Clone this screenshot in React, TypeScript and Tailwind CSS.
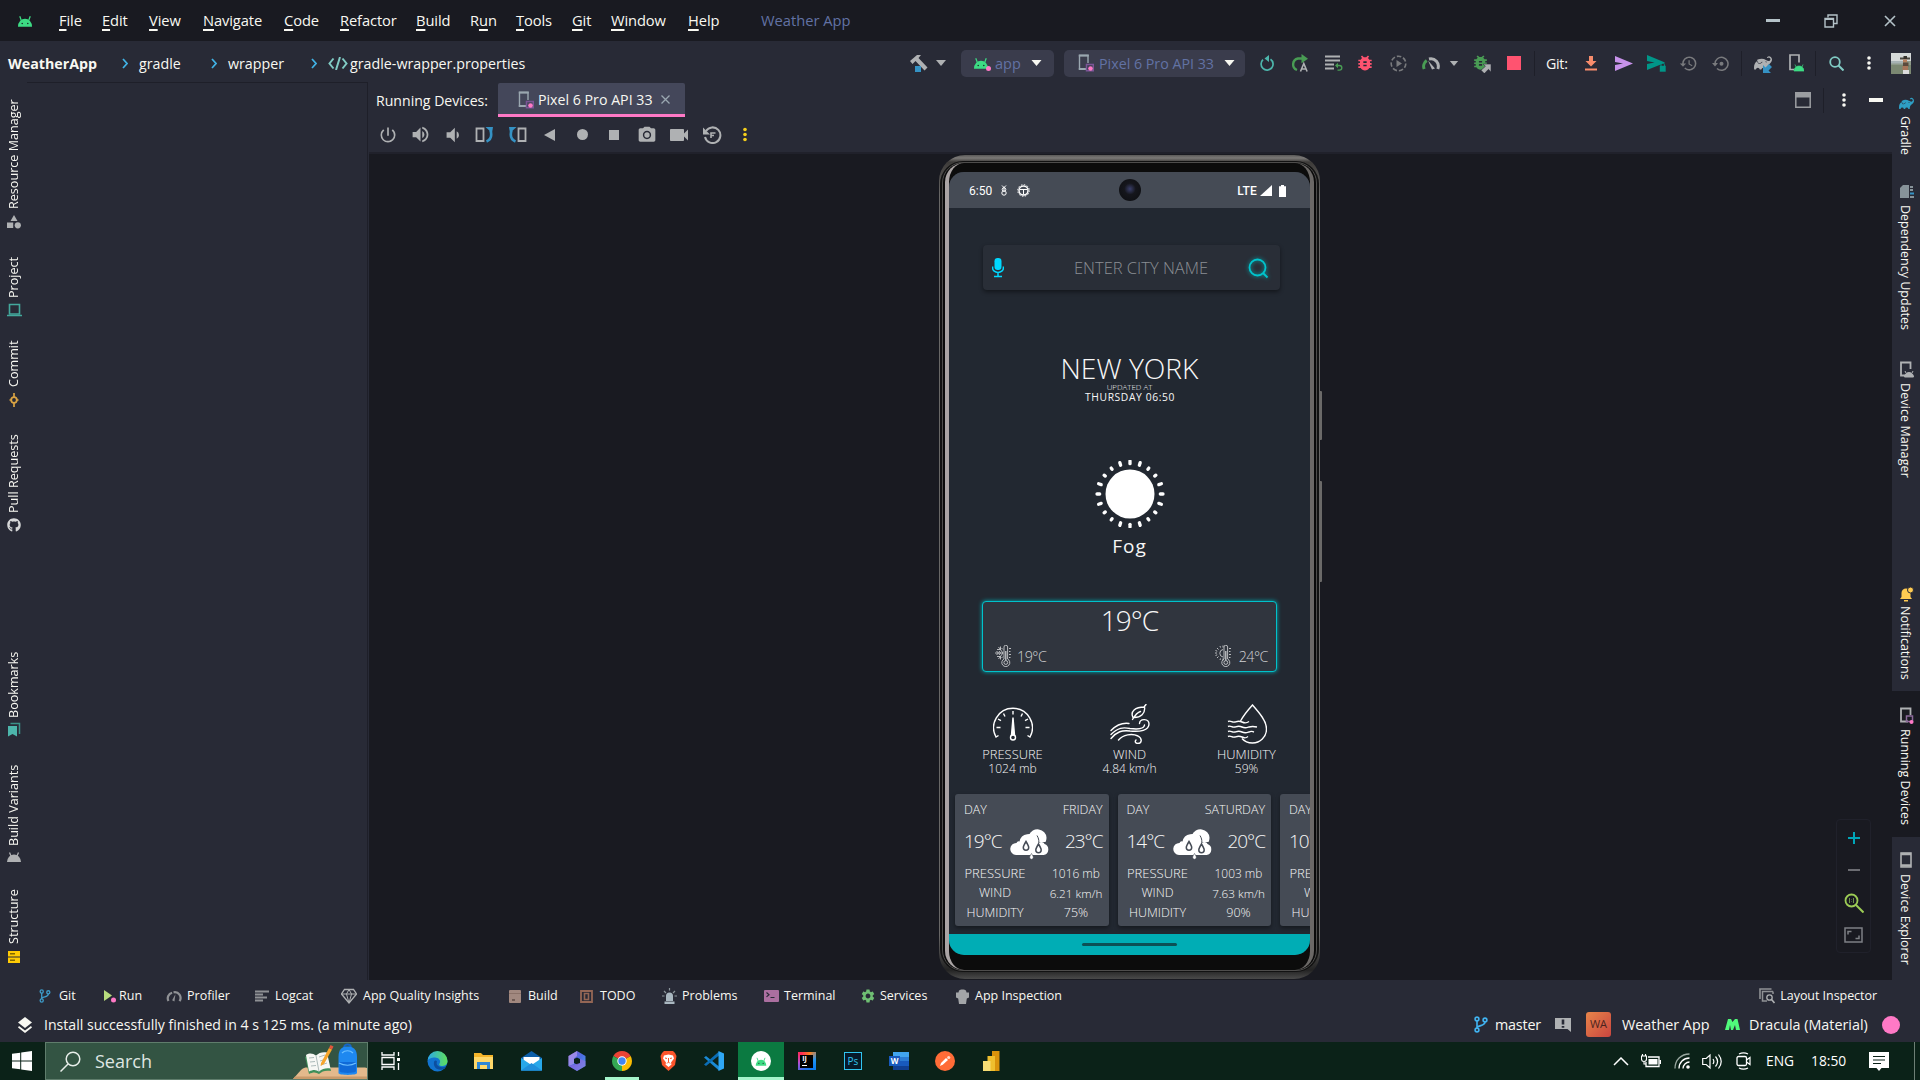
import React from 'react';
import type { ReactNode } from 'react';
import {
  MdPowerSettingsNew,
  MdVolumeUp,
  MdVolumeDown,
  MdPhotoCamera,
  MdVideocam,
  MdHistory,
  MdBugReport,
  MdSettings,
} from 'react-icons/md';
import { FaGithub } from 'react-icons/fa';
import { SiGradle } from 'react-icons/si';

type Cls = { c?: string };

function Ic({ c = '', vb = '0 0 16 16', children }: { c?: string; vb?: string; children: ReactNode }) {
  return (
    <svg viewBox={vb} className={`block shrink-0 ${c}`} fill="none">
      {children}
    </svg>
  );
}

/* ---------- shared glyphs ---------- */

const AndroidHead = ({ c = '' }: Cls) => (
  <Ic c={c} vb="0 0 18 16">
    <path d="M1 14.500a8 9 0 0 1 16 0z" fill="currentColor" />
    <path d="M5 8 3 2.500M13 8l2-5.500" stroke="currentColor" strokeWidth="1.400" />
    <circle cx="5.800" cy="10.800" r=".9" fill="#1b2a2a" />
    <circle cx="12.200" cy="10.800" r=".9" fill="#1b2a2a" />
  </Ic>
);

const Caret = ({ c = '' }: Cls) => (
  <Ic c={c} vb="0 0 10 6">
    <path d="M0 0h10L5 6z" fill="currentColor" />
  </Ic>
);

const Dots = ({ c = '' }: Cls) => (
  <Ic c={c} vb="0 0 4 14">
    <circle cx="2" cy="2" r="1.8" fill="currentColor" />
    <circle cx="2" cy="7" r="1.8" fill="currentColor" />
    <circle cx="2" cy="12" r="1.8" fill="currentColor" />
  </Ic>
);

const PhoneRun = ({ c = '' }: Cls) => (
  <Ic c={c} vb="0 0 16 18">
    <path d="M9 15H1.500V1.500H10V9" stroke="#9aa7b0" strokeWidth="1.400" />
    <path d="M.800 1.500h10M.800 15H8" stroke="#9aa7b0" strokeWidth="2" />
    <path d="M8.500 10.500h6.800v6.300H8.500z" stroke="#7a5596" strokeWidth="1.500" />
    <circle cx="12.500" cy="14.500" r="2.300" fill="#ff79c6" />
  </Ic>
);

const Branch = ({ c = '' }: Cls) => (
  <Ic c={c} vb="0 0 14 17">
    <g stroke="currentColor" strokeWidth="1.600">
      <circle cx="3" cy="3" r="1.900" />
      <circle cx="11" cy="4" r="1.900" />
      <circle cx="3" cy="14" r="1.900" />
      <path d="M3 4.800v7.400M11 6c0 3.500-4 3-8 5" />
    </g>
  </Ic>
);

const Gauge = ({ c = '' }: Cls) => (
  <Ic c={c} vb="0 0 18 14">
    <path d="M2.200 13a7 7 0 0 1 2.500-8.500" stroke="#499c54" strokeWidth="3" />
    <path d="M7 3a7.500 7.500 0 0 1 8.800 10" stroke="#afb1b3" strokeWidth="3" />
    <path d="m6 4.500 7 8-3 1z" fill="#afb1b3" />
  </Ic>
);

const GaugeGray = ({ c = '' }: Cls) => (
  <Ic c={c} vb="0 0 16 13">
    <path d="M2 12a6.200 6.200 0 0 1 4-9M7.500 2.500A6.200 6.200 0 0 1 14 12" stroke="#8f9195" strokeWidth="2.400" />
    <path d="m9.500 4.500-1 8L6 11z" fill="#8f9195" />
  </Ic>
);

/* ---------- title bar ---------- */

const menus = [
  { k: 'F', r: 'ile', c: 'w-[43px]' },
  { k: 'E', r: 'dit', c: 'w-[47px]' },
  { k: 'V', r: 'iew', c: 'w-[54px]' },
  { k: 'N', r: 'avigate', c: 'w-[81px]' },
  { k: 'C', r: 'ode', c: 'w-[56px]' },
  { k: 'R', r: 'efactor', c: 'w-[76px]' },
  { k: 'B', r: 'uild', c: 'w-[54px]' },
  { p: 'R', k: 'u', r: 'n', c: 'w-[46px]' },
  { k: 'T', r: 'ools', c: 'w-[56px]' },
  { k: 'G', r: 'it', c: 'w-[39px]' },
  { k: 'W', r: 'indow', c: 'w-[77px]' },
  { k: 'H', r: 'elp', c: 'w-[73px]' },
];

function TitleBar() {
  return (
    <div className="flex h-[41px] shrink-0 items-center bg-[#191a21] text-[14.700px] text-[#f8f8f2]">
      <AndroidHead c="ml-[17px] mr-[26px] h-[14px] w-4 text-[#3ddc84]" />
      {menus.map((m) => (
        <span key={m.k + m.r} className={`shrink-0 tracking-[-0.1px] ${m.c}`}>
          {m.p}
          <span className="underline decoration-2 underline-offset-[3px]">{m.k}</span>
          {m.r}
        </span>
      ))}
      <span className="text-[#6272a4]">Weather App</span>
      <span className="ml-auto mr-[44px] h-[3px] w-[14px] bg-[#b4c2c8]" />
      <Ic c="mr-[46px] h-[14px] w-[14px]" vb="0 0 14 14">
        <path d="M4 3.500V1h9v8.500h-3" stroke="#b4c2c8" strokeWidth="1.400" />
        <path d="M1 4.500h8.500V13H1z" stroke="#b4c2c8" strokeWidth="1.400" />
        <path d="M1 5h8.500" stroke="#b4c2c8" strokeWidth="2" />
      </Ic>
      <Ic c="mr-6 h-3 w-3" vb="0 0 12 12">
        <path d="m1 1 10 10M11 1 1 11" stroke="#b4c2c8" strokeWidth="1.600" />
      </Ic>
    </div>
  );
}

/* ---------- main toolbar ---------- */

const Chevron = ({ c = '' }: Cls) => (
  <Ic c={c} vb="0 0 6 11">
    <path d="m1 1 4 4.500-4 4.500" stroke="#41b3e6" strokeWidth="1.700" />
  </Ic>
);

const Rule = ({ c = '' }: Cls) => <span className={`h-[25px] w-px shrink-0 bg-[#1e1f29] ${c}`} />;

function Toolbar() {
  return (
    <div className="flex h-[41px] shrink-0 items-center whitespace-nowrap bg-[#282a36] pt-[3px] text-[14.250px] text-[#f8f8f2]">
      <b className="ml-2 w-[114px] shrink-0 pt-px">WeatherApp</b>
      <Chevron c="mr-[11px] h-[11px] w-[6px]" />
      <span className="w-[72px] shrink-0 pt-px">gradle</span>
      <Chevron c="mr-[11px] h-[11px] w-[6px]" />
      <span className="w-[83px] shrink-0 pt-px">wrapper</span>
      <Chevron c="mr-[11px] h-[11px] w-[6px]" />
      <Ic c="mr-[2px] h-[13px] w-5" vb="0 0 20 13">
        <path d="M5.500 1.500 1.500 6.500l4 5M14.500 1.500l4 5-4 5M12 0 8 13" stroke="#80cbc4" strokeWidth="2" />
      </Ic>
      <span className="w-[175px] shrink-0 pt-px">gradle-wrapper.properties</span>

      <Ic c="ml-[385px] h-[18px] w-[18px]" vb="0 0 18 18">
        <path d="M0 7 7 1h4L8.500 4l9 9.500-3 3L5.500 7 2.500 10z" fill="#afb1b3" />
        <path d="M5 12h6v6H5z" fill="#3592c4" />
      </Ic>
      <Caret c="ml-2 h-[6px] w-[10px] text-[#afb1b3]" />

      <div className="ml-[15px] flex h-[27px] w-[93px] shrink-0 items-center rounded-[5px] bg-[#3a3c4c] pl-3 text-[#6272a4]">
        <span className="relative mr-[6px]">
          <AndroidHead c="h-[14px] w-4 text-[#3ddc84]" />
          <span className="absolute -bottom-[1px] -right-[2px] h-[5px] w-[5px] rounded-full bg-[#ff79c6]" />
        </span>
        <span className="w-9 pt-px text-[14.500px]">app</span>
        <Caret c="h-[6px] w-[11px] text-[#f8f8f2]" />
      </div>
      <div className="ml-[10px] flex h-[27px] w-[181px] shrink-0 items-center rounded-[5px] bg-[#3a3c4c] pl-[14px] text-[#6272a4]">
        <PhoneRun c="mr-[5px] h-[18px] w-4" />
        <span className="w-[125px] pt-px">Pixel 6 Pro API 33</span>
        <Caret c="h-[6px] w-[11px] text-[#f8f8f2]" />
      </div>

      <Ic c="ml-[15px] h-[16px] w-[14px]" vb="0 0 14 16">
        <path d="M10.500 4.200A6 6 0 1 1 3 4.700" stroke="#4db6ac" strokeWidth="1.700" />
        <path d="M9 0 4.500 3.500 9 7z" fill="#4db6ac" />
      </Ic>
      <Ic c="ml-[17px] h-[18px] w-[17px]" vb="0 0 17 18">
        <path d="M6 16A6 6 0 0 1 7 4.500h5" stroke="#499c54" strokeWidth="2.400" />
        <path d="M10.500 0 17 4.700l-6.500 4.600z" fill="#499c54" />
        <path d="m9.500 17.500 3.300-8 3.300 8M10.600 15h4.400" stroke="#afb1b3" strokeWidth="1.600" />
      </Ic>
      <Ic c="ml-[17px] h-[16px] w-[18px]" vb="0 0 18 16">
        <path d="M0 1.500h15M0 5.500h15M0 9.500h9M0 13.500h9" stroke="#afb1b3" strokeWidth="2.200" />
        <path d="M11.500 10.500h3a2.300 2.300 0 0 1 0 4.600h-2" stroke="#499c54" strokeWidth="1.400" />
        <path d="m13 7.800-3 2.700 3 2.700z" fill="#499c54" />
      </Ic>
      <MdBugReport className="ml-[12px] h-5 w-5 shrink-0 text-[#ff5370]" />
      <Ic c="ml-[15px] h-[17px] w-[17px]" vb="0 0 17 17">
        <circle cx="8.500" cy="8.500" r="7.300" stroke="#797a7d" strokeWidth="1.600" strokeDasharray="4.500 2" />
        <path d="m6.500 5 5.500 3.500L6.500 12z" fill="#797a7d" />
      </Ic>
      <Gauge c="ml-[15px] h-[14px] w-[18px]" />
      <Caret c="ml-[9px] h-[5px] w-[10px] text-[#afb1b3]" />
      <span className="relative ml-[12px] h-5 w-5 shrink-0">
        <MdBugReport className="h-[19px] w-[19px] text-[#499c54]" />
        <Ic c="absolute bottom-0 right-0 h-[10px] w-[10px]" vb="0 0 9 9">
          <path d="M2 1h7v7L6.700 5.700 3 9.500 0 6.500l4-3.500z" fill="#afb1b3" stroke="#282a36" strokeWidth=".5" />
        </Ic>
      </span>
      <span className="ml-[16px] h-[14px] w-[14px] shrink-0 bg-[#ff5370]" />
      <Rule c="ml-[13px]" />
      <span className="ml-[11px] w-[22px] shrink-0 pt-px tracking-[-0.3px]">Git:</span>
      <Ic c="ml-[17px] h-[15px] w-[12px]" vb="0 0 12 15">
        <path d="M4 0h4v5h3.500L6 10.500.500 5H4z" fill="#f78c6c" />
        <path d="M0 13.500h12" stroke="#f78c6c" strokeWidth="2" />
      </Ic>
      <Ic c="ml-[18px] h-[15px] w-[18px]" vb="0 0 18 15">
        <path d="m0 0 18 7.500L0 15V9l8-1.500L0 6z" fill="#c792ea" />
      </Ic>
      <Ic c="ml-[14px] h-[18px] w-[19px]" vb="0 0 19 18">
        <path d="m0 1 18 7.500-3 1.500L0 16v-6l7.500-1.500L0 7z" fill="#009688" />
        <path d="M12.500 11.500h6.500V18h-6.500z" fill="#009688" stroke="#282a36" strokeWidth=".6" />
        <path d="M14 12v-1.500a1.700 1.700 0 0 1 3.400 0V12" stroke="#009688" />
      </Ic>
      <MdHistory className="ml-[13px] h-[19px] w-[19px] shrink-0 text-[#797a7d]" />
      <Ic c="ml-[14px] h-[17px] w-[17px]" vb="0 0 17 17">
        <path d="M3 9a6.500 6.500 0 1 1 2 4.500" stroke="#797a7d" strokeWidth="1.500" />
        <path d="M0 8h6L3 11.500z" fill="#797a7d" />
        <circle cx="9.500" cy="8.700" r="2" fill="#797a7d" />
      </Ic>
      <Rule c="ml-[12px]" />
      <span className="relative ml-[12px] shrink-0">
        <SiGradle className="h-[18px] w-[18px] text-[#afb1b3]" />
        <Ic c="absolute -bottom-[1px] right-0 h-[9px] w-[9px]" vb="0 0 9 9">
          <path d="M0 9V1l2.500 2.500L6 0l3 3-3.500 3.500L8 9z" fill="#3592c4" />
        </Ic>
      </span>
      <Ic c="ml-[17px] h-[18px] w-[15px]" vb="0 0 15 18">
        <path d="M5 15.500H1V1h9v7.500" stroke="#afb1b3" strokeWidth="1.700" />
        <path d="M5 17a5 5 0 0 1 10 0zM7 13l-1-2.500M13 13l1-2.500" fill="#3ddc84" stroke="#3ddc84" strokeWidth=".7" />
      </Ic>
      <Rule c="ml-[11px]" />
      <Ic c="ml-[13px] h-[15px] w-[15px]" vb="0 0 15 15">
        <circle cx="6" cy="6" r="4.800" stroke="#80cbc4" strokeWidth="1.800" />
        <path d="m9.500 9.500 5 5" stroke="#80cbc4" strokeWidth="2" />
      </Ic>
      <Dots c="ml-[23px] h-[14px] w-1 text-[#f8f8f2]" />
      <Ic c="ml-[20px] h-[21px] w-5" vb="0 0 20 21">
        <path d="M0 0h20v21H0z" fill="#8e9a8a" />
        <path d="M0 0h20v8H0z" fill="#d5d9d8" />
        <path d="M0 8h12v2.500H0z" fill="#a7b3b4" />
        <path d="M0 12h20v9H0z" fill="#7b8872" />
        <path d="M9 4.500h10v2H9z" fill="#4c4840" />
        <path d="M12.500 3h3.500v3h-3.500z" fill="#35312b" />
        <path d="M12 6.500h4v3h-4z" fill="#b9805d" />
        <path d="M12 9.500h5.500v4H12z" fill="#5c4a3c" />
        <path d="M11.500 13h5.500v4h-5.500z" fill="#a8765a" />
        <path d="M12 17h6v4h-6z" fill="#dcdcdc" />
      </Ic>
    </div>
  );
}

/* ---------- side strips ---------- */

const leftTabs = [
  {
    t: 'Resource Manager', c: 'mt-[15px] h-[112px]', g: 'mt-[6px]',
    i: (
      <Ic c="h-[14px] w-[14px]" vb="0 0 14 14">
        <path d="M7 0l3.500 6h-7zM0 7.500h6.200V13H0z" fill="#afb1b3" />
        <circle cx="10.800" cy="10.300" r="3.100" fill="#afb1b3" />
      </Ic>
    ),
  },
  {
    t: 'Project', c: 'mt-[28px] h-[41px]', g: 'mt-[5px]',
    i: (
      <Ic c="h-[14px] w-[15px]" vb="0 0 15 14">
        <path d="M2.500 1.500h10v9.500h-10z" stroke="#43a89c" strokeWidth="1.600" />
        <path d="M0 12.500h15" stroke="#43a89c" strokeWidth="1.500" />
      </Ic>
    ),
  },
  {
    t: 'Commit', c: 'mt-[25px] h-[45px]', g: 'mt-[6px]',
    i: (
      <Ic c="h-[14px] w-[14px]" vb="0 0 14 14">
        <circle cx="7" cy="7" r="2.800" stroke="#d9a343" strokeWidth="1.800" />
        <path d="M7 0v4M7 10v4M2.500 7h1.500M10 7h1.500" stroke="#d9a343" strokeWidth="1.700" />
      </Ic>
    ),
  },
  { t: 'Pull Requests', c: 'mt-[28px] h-[78px]', g: 'mt-[5px]', i: <FaGithub className="h-[14px] w-[14px] text-[#d6d7d8]" /> },
  {
    t: 'Bookmarks', c: 'mt-[122px] h-[64px]', g: 'mt-[4px]',
    i: (
      <Ic c="h-[15px] w-[14px]" vb="0 0 14 15">
        <path d="M1 4h9v10.500L5.500 12 1 14.500z" fill="#4db6ac" />
        <path d="M3.500 1.500h9V12" stroke="#3a9188" strokeWidth="1.500" />
      </Ic>
    ),
  },
  {
    t: 'Build Variants', c: 'mt-[29px] h-[80px]', g: 'mt-[4px]',
    i: (
      <Ic c="h-[14px] w-[14px]" vb="0 0 14 14">
        <path d="M0 12a7 7.500 0 0 1 14 0z" fill="#afb1b3" />
        <path d="M4 6 2.500 2.500M10 6l1.500-3.500" stroke="#afb1b3" strokeWidth="1.300" />
      </Ic>
    ),
  },
  {
    t: 'Structure', c: 'mt-[29px] h-[51px]', g: 'mt-[6px]',
    i: (
      <Ic c="h-[14px] w-[14px]" vb="0 0 14 14">
        <path d="M1 1h12v5.500H1zM1 7.500h12V13H1z" fill="#ffcb05" />
        <path d="M3 3.800h5M3 10.200h5" stroke="#806600" strokeWidth="1.600" />
      </Ic>
    ),
  },
];

function LeftStrip() {
  return (
    <div className="flex w-[27px] shrink-0 flex-col items-center pl-px text-[12.600px]">
      {leftTabs.map((x) => (
        <React.Fragment key={x.t}>
          <span className={`flex shrink-0 rotate-180 whitespace-nowrap leading-[18px] [writing-mode:vertical-rl] ${x.c}`}>{x.t}</span>
          <span className={`shrink-0 ${x.g}`}>{x.i}</span>
        </React.Fragment>
      ))}
    </div>
  );
}

const DevIcon = ({ run }: { run?: boolean }) => (
  <Ic c="h-[17px] w-[15px]" vb="0 0 15 17">
    <path d="M9 14.500H2V1.500h9.500V8" stroke="#afb1b3" strokeWidth="1.800" />
    {run ? (
      <>
        <path d="M7.500 9h6v5.500h-6z" stroke="#8b6a9a" strokeWidth="1.500" />
        <circle cx="12.500" cy="15" r="2" fill="#ff79c6" />
      </>
    ) : (
      <path d="M5.500 16a4.500 4.500 0 0 1 9 0zM7 12 6 10M13 12l1-2" fill="#afb1b3" stroke="#afb1b3" />
    )}
  </Ic>
);

function RightStrip() {
  const text = 'whitespace-nowrap leading-[18px] [writing-mode:vertical-rl] shrink-0 mr-[2px]';
  return (
    <div className="flex w-7 shrink-0 flex-col items-center text-[12.500px]">
      <SiGradle className="mt-[13px] h-[17px] w-[15px] shrink-0 text-[#2e9ec4]" />
      <span className={`mt-[4px] h-[40px] ${text}`}>Gradle</span>
      <Ic c="mt-[28px] h-[16px] w-[15px]" vb="0 0 15 16">
        <path d="M4 1h6v13H1V4z" fill="#87939a" />
        <path d="M11 3h3M11 6h3" stroke="#87939a" strokeWidth="1.800" />
        <path d="M11 9.500h4" stroke="#3592c4" strokeWidth="2" />
        <path d="M11 13h4" stroke="#87939a" strokeWidth="2" />
      </Ic>
      <span className={`mt-[5px] h-[126px] ${text}`}>Dependency Updates</span>
      <span className="mt-[30px]"><DevIcon /></span>
      <span className={`mt-[5px] h-[96px] tracking-[0.1px] ${text}`}>Device Manager</span>
      <Ic c="mt-[107px] h-[16px] w-[15px]" vb="0 0 15 16">
        <path d="M2.500 11V7a4.500 4.500 0 0 1 9 0v4l1.500 2H1zM5 14h4v1.500H5z" fill="#ffcb52" />
        <circle cx="11.500" cy="4" r="3" fill="#ffcb52" stroke="#282a36" />
      </Ic>
      <span className={`mt-[4px] h-[74px] ${text}`}>Notifications</span>
      <div className="mt-[11px] flex h-[146px] w-full shrink-0 flex-col items-center bg-[#191a21] pt-[16px]">
        <DevIcon run />
        <span className={`mt-[5px] ${text}`}>Running Devices</span>
      </div>
      <Ic c="mt-[15px] h-[16px] w-[12px]" vb="0 0 12 16">
        <path d="M1 1h10v14H1z" stroke="#afb1b3" strokeWidth="1.600" />
        <path d="M1 2h10M1 13.500h10" stroke="#afb1b3" strokeWidth="2.500" />
      </Ic>
      <span className={`mt-[6px] ${text}`}>Device Explorer</span>
    </div>
  );
}

/* ---------- phone ---------- */

const rays = Array.from({ length: 20 }, (_, i) => i * 18);

const Cloud = () => (
  <Ic c="h-[31px] w-10" vb="0 0 40 31">
    <path d="M19 6a9 8.500 0 0 1 17.500 2.500c0 2-.500 3.500-1 4.500H22z" fill="#fff" />
    <path d="M6 26a6 6 0 0 1 .500-12 2.500 2.500 0 0 1 3-1.500A9.500 9 0 0 1 27 9.500c1 1 1.500 3 1.500 4.500 2.500-2 5.500-1 6 1a5.700 5.700 0 0 1-1 11z" fill="#fff" />
    <path d="M27 6.500c1.500 2.500 2 4.500 1.800 7" stroke="#454b55" />
    <path d="M16 12.500c-1.800 3-2.700 4.500-2.700 6a2.700 2.700 0 0 0 5.400 0c0-1.500-.900-3-2.700-6zM28.500 15c-1.800 3-2.700 4.500-2.700 6a2.700 2.700 0 0 0 5.400 0c0-1.500-.900-3-2.700-6z" fill="#fff" stroke="#454b55" strokeWidth="1.500" />
    <path d="M21.500 24.500c-1.300 2-1.800 2.800-1.800 4a1.800 1.800 0 0 0 3.600 0c0-1.200-.500-2-1.800-4z" fill="#fff" stroke="#454b55" strokeWidth=".6" />
  </Ic>
);

const Thermo = ({ cold }: { cold?: boolean }) => (
  <Ic c="h-[22px] w-4" vb="0 0 16 22">
    <g stroke="#c9cbcd" strokeWidth=".9">
      <path d="M9 14V2a1.800 1.800 0 0 1 3.600 0v12a4 4 0 1 1-3.600 0z" />
      <circle cx="10.800" cy="17.500" r="1.900" />
      <path d="M10.800 15.500V6" strokeWidth="1.300" />
      <path d="M14 3.500h2M14 6.500h1.500M14 9.500h2M14 12.500h1.500" />
      {cold ? (
        <path d="M8 8H0M8 8 3.500 2M8 8l-4.500 6M5.500 1.500v3H2M5.500 14.500v-3H2M6.500 3 8 4.500M6.500 13 8 11.500M1.500 6 3.500 8l-2 2M4 6l1.500 2L4 10" />
      ) : (
        <>
          <path d="M8 4.500a3.800 3.800 0 0 0 0 7.500" />
          <path d="M8 .500v2M8 13.500v2M0 8h2M2 3l1.500 1.500M2 13l1.500-1.500M5 1l.500 1.500M5 15l.500-1.500M.500 5.500l1.700.700M.500 10.500l1.700-.700" />
        </>
      )}
    </g>
  </Ic>
);

const metrics = [
  {
    n: 'PRESSURE', v: '1024 mb',
    i: (
      <Ic c="h-10 w-10" vb="0 0 40 40">
        <g stroke="#fff" strokeWidth="1.400">
          <path d="M5.500 31.500 3 33A19.400 19.400 0 1 1 37 33l-2.500-1.500" />
          <path d="M20 7v3.500M10.500 9.500l1.500 3M29.500 9.500 28 12.500M5 15l3 1.700M35 15l-3 1.700M3.500 23.500h4M36.500 23.500h-4" />
          <path d="M20 13.500 18.500 31h3z" fill="#fff" />
          <circle cx="20" cy="33.500" r="2.500" fill="#222831" />
        </g>
      </Ic>
    ),
  },
  {
    n: 'WIND', v: '4.84 km/h',
    i: (
      <Ic c="h-10 w-10" vb="0 0 40 40">
        <g stroke="#fff" strokeWidth="1.400" strokeLinecap="round">
          <path d="M1 26.500C7 20.500 12 18.500 19 19.500M1 34.500C7 27.500 12 26 20 27c10 1 19-.500 19-7 0-5.500-9-6-9.500-.500M1 30.500C8 23.500 13 23 20 24.500c8 1 14 .500 14.500-3.500" />
          <path d="M8.500 36C13 30.500 22 29 28 32c5 3 3.500 7.500 0 7.500-2.500 0-3.500-2-2-3.500" />
          <path d="M23 13.500c-3-6 2-10.500 11.500-10.500 1 6-3.500 11-11.500 10.500zM22.500 15.500c3-5 6-7.500 8-8M34 3l2-2.500" />
        </g>
      </Ic>
    ),
  },
  {
    n: 'HUMIDITY', v: '59%',
    i: (
      <Ic c="h-10 w-10" vb="0 0 40 40">
        <g stroke="#fff" strokeWidth="1.400">
          <path d="M13.500 17C16.500 11.500 21 6 25.500 1c7 8 14 16 14 24 0 8-6.500 14-14 14-4 0-8-1.500-10.500-4.500" />
          <path d="M1 17.500c3-1.500 4 1.500 7 .500s4-1.500 7 0 5 1 7-.500M1 22.500c3-1.500 4 1.500 7 .500s4-1.500 7 0 4 1 7 0 4-1 8 0M1 27.500c3-1.500 4 1.500 7 .500s4-1.500 7 0 4 1 7 0 2-1 5 0M1 32.500c3-1.500 4 1.500 7 .500s4-1.500 7 0 4 1 6-.500" />
        </g>
      </Ic>
    ),
  },
];

const days = [
  { d: 'FRIDAY', lo: '19°C', hi: '23°C', p: '1016 mb', w: '6.21 km/h', h: '75%' },
  { d: 'SATURDAY', lo: '14°C', hi: '20°C', p: '1003 mb', w: '7.63 km/h', h: '90%' },
  { d: 'SUNDAY', lo: '10°C', hi: '18°C', p: '1009 mb', w: '5.12 km/h', h: '64%' },
];

function Phone() {
  return (
    <div className="mt-px flex h-[824px] w-[381px] shrink-0 rounded-[26px] bg-[linear-gradient(to_bottom,#5a5958_0,#7b7977_3px,#3d3b39_7px,#686766_40px,#686766_780px,#232323_815px,#4a4a4a_100%)] px-px pb-[7px] pt-[6px]">
      <div className="flex flex-1 rounded-[23px] bg-[#121212] px-[2px] py-px">
        <div className="flex flex-1 rounded-[21px] border border-[#4e4d4c] bg-[#0a0a0a] px-[2px]">
          <div className="flex flex-1 rounded-[19px] border-x-4 border-l-[#aaa4a4] border-r-[#6b6866] bg-[#0c0c0c] pb-[15px] pt-[9px]">
            <div className="flex h-[783px] w-[361px] flex-col overflow-hidden rounded-[15px] bg-[#222831] font-light text-[#f7f7f7]">
              <div className="relative flex h-9 shrink-0 items-center bg-[#454b55] pl-5 pr-6 pt-px font-[Roboto] text-[12px] text-white">
                <span className="w-[31px] font-normal">6:50</span>
                <Ic c="mr-[9px] h-[11px] w-[8px]" vb="0 0 8 11">
                  <path d="M2 .500 4 2.500l2-2M4 2v3" stroke="#fff" />
                  <circle cx="4" cy="4.500" r="1.800" stroke="#fff" />
                  <circle cx="4" cy="8" r="2.200" stroke="#fff" />
                </Ic>
                <Ic c="h-[13px] w-[13px]" vb="0 0 13 13">
                  <circle cx="6.500" cy="6.500" r="4.500" stroke="#fff" strokeWidth="1.500" />
                  <circle cx="6.500" cy="6.500" r="5.800" stroke="#fff" strokeDasharray="1.500 1.500" />
                  <path d="M3 5.500h7M6.500 5.500v5" stroke="#fff" />
                </Ic>
                <span className="ml-auto mr-[3px] font-medium tracking-[0.200px]">LTE</span>
                <Ic c="mr-[7px] h-[11px] w-[12px]" vb="0 0 12 11"><path d="M12 0v11H0z" fill="#fff" /></Ic>
                <Ic c="h-[12px] w-[7px]" vb="0 0 7 12"><path d="M2 0h3v1.300h2V12H0V1.300h2z" fill="#fff" /></Ic>
                <span className="absolute left-[170px] top-[7px] h-[22px] w-[22px] rounded-full bg-[radial-gradient(circle_at_50%_45%,#3a3f6a_0,#15161c_35%,#0c0d10_100%)]" />
              </div>

              <div className="ml-[34px] mt-[37px] flex h-[45px] w-[297px] shrink-0 items-center rounded-[4px] bg-[#292e37] shadow-[0_2px_4px_rgba(0,0,0,0.45)]">
                <Ic c="ml-[9px] h-5 w-3" vb="0 0 12 20">
                  <rect x="2.500" y="0" width="7" height="12" rx="3.200" fill="#00d8ff" />
                  <path d="M.600 8.500v1.500a5.400 4.500 0 0 0 10.800 0V8.500M6 14.500v3.500M2 18.500h8" stroke="#00d8ff" strokeWidth="1.500" />
                </Ic>
                <span className="ml-[70px] w-[134px] whitespace-nowrap pt-px text-[16.500px] text-[#8b8f94]">ENTER CITY NAME</span>
                <Ic c="ml-[38px] h-[24px] w-[24px] drop-shadow-[0_0_2px_#00adb5]" vb="0 0 24 24">
                  <circle cx="11.500" cy="11.500" r="8" stroke="#00c4cd" strokeWidth="1.800" />
                  <path d="m17 17 4.500 4.500" stroke="#00c4cd" strokeWidth="1.800" />
                </Ic>
              </div>

              <div className="mt-[64px] flex shrink-0 flex-col items-center">
                <span className="h-[29px] text-[28.200px] leading-7">NEW YORK</span>
                <span className="h-2 text-[7.900px] leading-[8px]">UPDATED AT</span>
                <span className="h-[11px] pl-px pt-px text-[10.300px] font-normal leading-[11px] tracking-[0.600px]">THURSDAY 06:50</span>
              </div>

              <div className="mt-[58px] flex shrink-0 flex-col items-center">
                <Ic c="h-[68px] w-[70px]" vb="-35 -34 70 68">
                  <circle r="24.500" fill="#fff" />
                  {rays.map((a, i) => (
                    <path key={a} d={i % 5 === 0 || i % 5 === 1 || i % 5 === 4 ? 'M0-30.300V-33' : 'M0-30.500V-32'} stroke="#fff" strokeWidth="3.300" strokeLinecap="round" transform={`rotate(${a})`} />
                  ))}
                </Ic>
                <span className="mt-[6px] h-6 text-[19px] font-normal leading-6 tracking-[0.900px]">Fog</span>
              </div>

              <div className="ml-[33px] mt-[43px] flex h-[71px] w-[295px] shrink-0 flex-col rounded-[4px] border border-[#00c2cb] bg-[#30353e] shadow-[0_0_4px_#00adb5]">
                <span className="h-[42px] text-center text-[28px] leading-[36px] tracking-[-1px]">19°C</span>
                <div className="flex h-6 items-center pl-3 pr-2 text-[14.300px] tracking-[-0.500px] text-[#d0d2d4]">
                  <Thermo cold />
                  <span className="ml-[6px] pt-px">19°C</span>
                  <span className="ml-auto mr-[8px]"><Thermo /></span>
                  <span className="pt-px">24°C</span>
                </div>
              </div>

              <div className="ml-[5px] mt-8 grid w-[351px] shrink-0 grid-cols-3">
                {metrics.map((m) => (
                  <div key={m.n} className="flex flex-col items-center">
                    {m.i}
                    <span className="mt-[3px] h-[14px] text-[12.900px] leading-[14px]">{m.n}</span>
                    <span className="h-[15px] text-[12px] leading-[15px]">{m.v}</span>
                  </div>
                ))}
              </div>

              <div className="ml-[6px] mt-[18px] flex shrink-0 gap-[9px]">
                {days.map((x) => (
                  <div key={x.d} className="h-[132px] w-[153.500px] shrink-0 rounded-[3px] bg-[#454b55] pl-[9px] pr-[6px] pt-[6px] text-[12.500px] shadow-[0_2px_4px_rgba(0,0,0,0.4)]">
                    <div className="flex h-5 items-center justify-between">
                      <span>DAY</span>
                      <span>{x.d}</span>
                    </div>
                    <div className="flex h-[43px] items-center justify-between text-[19px] tracking-[-1px]">
                      <span className="w-10">{x.lo}</span>
                      <span className="pt-[6px]"><Cloud /></span>
                      <span className="w-[46px] text-right">{x.hi}</span>
                    </div>
                    <div className="grid grid-cols-[62px_53px] justify-between whitespace-nowrap text-center leading-5">
                      <span className="text-[13px]">PRESSURE</span>
                      <span className="text-[11.900px]">{x.p}</span>
                      <span>WIND</span>
                      <span className="text-[11.700px]">{x.w}</span>
                      <span>HUMIDITY</span>
                      <span>{x.h}</span>
                    </div>
                  </div>
                ))}
              </div>

              <div className="mt-auto flex h-[21px] shrink-0 items-center justify-center bg-[#00adb5]">
                <span className="h-[3px] w-[95px] rounded-full bg-[#0c5055]" />
              </div>
            </div>
          </div>
        </div>
      </div>
    </div>
  );
}

/* ---------- running devices ---------- */

function Devices() {
  const g = 'text-[#afb1b3] shrink-0';
  return (
    <div className="flex flex-1 flex-col">
      <div className="flex h-[35px] shrink-0 items-center whitespace-nowrap pl-[7px] pt-px text-[14.100px]">
        <span className="w-[122px] shrink-0 pt-px">Running Devices:</span>
        <div className="flex h-[34px] w-[187px] shrink-0 items-center rounded-t-[2px] border-b-[3px] border-[#ff79c6] bg-[#44475a] pl-5 pt-[2px]">
          <PhoneRun c="mr-[4px] h-[18px] w-4" />
          <span className="w-[123px] pt-px text-[14.200px]">Pixel 6 Pro API 33</span>
          <Ic c="h-[9px] w-[9px]" vb="0 0 9 9"><path d="m.500.500 8 8M8.500.500l-8 8" stroke="#9aa7b0" strokeWidth="1.300" /></Ic>
        </div>
        <Ic c="ml-auto h-4 w-4">
          <path d="M.800.800h14.400v14.400H.800z" stroke="#9b9da1" strokeWidth="1.500" />
          <path d="M0 0h16v5.500H0z" fill="#9b9da1" />
        </Ic>
        <Rule c="ml-3" />
        <Dots c="ml-[18px] h-[14px] w-1 text-[#f8f8f2]" />
        <span className="ml-[23px] mr-[9px] h-[4px] w-[14px] bg-[#f8f8f2]" />
      </div>
      <div className="flex h-[35px] shrink-0 items-center pl-[9px]">
        <MdPowerSettingsNew className={`h-5 w-5 stroke-current ${g}`} />
        <MdVolumeUp className={`ml-[12px] h-[21px] w-[21px] ${g}`} />
        <MdVolumeDown className={`ml-[11px] h-[22px] w-[22px] ${g}`} />
        <Ic c="ml-[11px] h-4 w-[19px]" vb="0 0 19 16">
          <path d="M1.500 1.500h7v12.500h-7z" stroke="#afb1b3" strokeWidth="1.800" />
          <path d="M11.500 14.500c5-2 5.500-6 4-11" stroke="#3592c4" strokeWidth="2.600" />
          <path d="M10.500 0H18l-1 6z" fill="#3592c4" />
        </Ic>
        <Ic c="ml-[14px] h-4 w-[19px]" vb="0 0 19 16">
          <path d="M10.500 1.500h7V14h-7z" stroke="#afb1b3" strokeWidth="1.800" />
          <path d="M7.500 14.500c-5-2-5.500-6-4-11" stroke="#3592c4" strokeWidth="2.600" />
          <path d="M8.500 0H1l1 6z" fill="#3592c4" />
        </Ic>
        <Ic c="ml-[17px] h-3 w-[11px]" vb="0 0 11 12"><path d="M11 0v12L0 6z" fill="#afb1b3" /></Ic>
        <span className="ml-[22px] h-[11px] w-[11px] shrink-0 rounded-full bg-[#afb1b3]" />
        <span className="ml-[21px] h-[10px] w-[10px] shrink-0 bg-[#afb1b3]" />
        <MdPhotoCamera className={`ml-[18px] h-5 w-5 ${g}`} />
        <MdVideocam className={`ml-[10px] h-6 w-6 ${g}`} />
        <Ic c="ml-[12px] h-[18px] w-[19px]" vb="0 0 19 18">
          <path d="M3 5a7.800 7.800 0 1 1-1 6" stroke="#afb1b3" strokeWidth="2" />
          <path d="M0 1.500v7h7z" fill="#afb1b3" />
          <path d="M8 12V7h4.500M8 9.500h3" stroke="#afb1b3" strokeWidth="1.600" />
        </Ic>
        <Dots c="ml-[21px] h-[15px] w-1 text-[#f5cf1b]" />
      </div>
      <div className="flex flex-1 items-start overflow-hidden border-t-2 border-[#20212b] bg-[#191a21] pl-[570px]">
        <Phone />
        <div className="flex w-[2px] shrink-0 flex-col">
          <span className="mt-[237px] h-[49px] rounded-r-[1px] bg-[#6b6a69]" />
          <span className="mt-[41px] h-[101px] rounded-r-[1px] bg-[#6b6a69]" />
        </div>
        <div className="mb-[27px] ml-auto mr-[21px] flex h-[134px] w-[35px] flex-col items-center self-end rounded-[4px] border border-[#20212b]">
          <Ic c="mt-[12px] h-3 w-3" vb="0 0 12 12"><path d="M6 0v12M0 6h12" stroke="#00a5b8" strokeWidth="2" /></Ic>
          <span className="mt-[25px] h-[1.500px] w-3 bg-[#6b6c72]" />
          <Ic c="mt-[22px] h-5 w-5" vb="0 0 20 20">
            <circle cx="7.500" cy="7.500" r="6" stroke="#9ccc55" strokeWidth="1.800" />
            <path d="m12 12 7.500 7.500" stroke="#9ccc55" strokeWidth="2" />
            <path d="M5.500 5v5M7.500 6v.500M7.500 8.500v.500M9.500 5v5" stroke="#6d8f4a" />
          </Ic>
          <Ic c="mt-[14px] h-[16px] w-[19px]" vb="0 0 19 16">
            <path d="M1 1h17v14H1z" stroke="#7e8085" strokeWidth="1.500" />
            <path d="M4 7.500V4.500h3.500M15 8.500v3h-3.500" stroke="#7e8085" strokeWidth="1.500" />
          </Ic>
        </div>
      </div>
    </div>
  );
}

/* ---------- bottom bars ---------- */

function BottomTools() {
  const s = 'shrink-0 pt-px';
  return (
    <div className="flex h-8 shrink-0 items-center whitespace-nowrap bg-[#282a36] text-[12.500px]">
      <Branch c="ml-[39px] h-[14px] w-[12px] text-[#3d9bc9]" />
      <span className={`ml-2 w-[45px] ${s}`}>Git</span>
      <Ic c="h-[14px] w-[13px]" vb="0 0 13 14">
        <path d="m0 1 8 5.500L0 12z" fill="#b7dc7d" />
        <circle cx="9.500" cy="11" r="2.500" fill="#ff79c6" />
      </Ic>
      <span className={`ml-[2px] w-[47px] ${s}`}>Run</span>
      <GaugeGray c="h-3 w-4" />
      <span className={`ml-[5px] w-[68px] ${s}`}>Profiler</span>
      <Ic c="h-[12px] w-[15px]" vb="0 0 15 12">
        <path d="M0 1.500h14M0 4.500h8M0 7.500h12M0 10.500h8" stroke="#8f9195" strokeWidth="2" />
      </Ic>
      <span className={`ml-[5px] w-[66px] ${s}`}>Logcat</span>
      <Ic c="h-4 w-4">
        <path d="M3.500 1.500h9L15.500 6 8 15 .500 6z" stroke="#afb1b3" strokeWidth="1.300" />
        <path d="M.500 6h15M5.500 6 8 15l2.500-9L8 1.500z" stroke="#afb1b3" />
      </Ic>
      <span className={`ml-[6px] w-[146px] ${s}`}>App Quality Insights</span>
      <Ic c="h-[13px] w-[12px]" vb="0 0 12 13">
        <rect width="12" height="13" rx="1" fill="#a1887f" />
        <path d="M0 3.500h12" stroke="#8a7168" />
        <path d="M3 10h3" stroke="#5d4a44" strokeWidth="1.500" />
      </Ic>
      <span className={`ml-[7px] w-[52px] ${s}`}>Build</span>
      <Ic c="h-[13px] w-[13px]" vb="0 0 13 13">
        <path d="M1 1h11v11H1z" stroke="#946655" strokeWidth="1.800" />
        <path d="M4.500 3.500h4v6h-4z" stroke="#946655" strokeWidth="1.600" />
      </Ic>
      <span className={`ml-[7px] w-[62px] ${s}`}>TODO</span>
      <Ic c="h-4 w-[15px]" vb="0 0 15 16">
        <path d="M4 13V8a3.500 3.500 0 0 1 7 0v5zM2.500 13.500h10V16h-10z" fill="#a9b7c0" />
        <path d="M7.500 0v2.500M2 3l2 2M13 3l-2 2M0 8h2.500M15 8h-2.500" stroke="#8a949a" strokeWidth="1.200" />
      </Ic>
      <span className={`ml-[5px] w-[82px] ${s}`}>Problems</span>
      <Ic c="h-[12px] w-[15px]" vb="0 0 15 12">
        <rect width="15" height="12" rx="1" fill="#ab6fa0" />
        <path d="m2.500 2.500 2.500 2.200-2.500 2.200M6.500 7.500h4" stroke="#282a36" strokeWidth="1.200" />
      </Ic>
      <span className={`ml-[5px] w-[76px] ${s}`}>Terminal</span>
      <MdSettings className="h-[16px] w-[16px] shrink-0 text-[#6fbf73]" />
      <span className={`ml-[4px] w-[76px] ${s}`}>Services</span>
      <Ic c="h-[15px] w-[13px]" vb="0 0 13 15">
        <path d="M3 1.500C4 0 9 0 10 1.500l.500 2H13v5l-2.200 1L10 15H3l-.800-5.500L0 8.500v-5h2.500z" fill="#a3a5a8" />
      </Ic>
      <span className={`ml-[6px] ${s}`}>App Inspection</span>
      <Ic c="ml-auto h-[16px] w-4">
        <path d="M12.500 1H1v10" stroke="#8f9195" strokeWidth="1.600" />
        <path d="M14 3.500H3.500V13H8M14 3.500V6" stroke="#8f9195" strokeWidth="1.500" />
        <circle cx="10.500" cy="9.500" r="2.700" stroke="#afb1b3" strokeWidth="1.300" />
        <path d="m12.500 11.500 3 3.500" stroke="#afb1b3" strokeWidth="1.600" />
      </Ic>
      <span className="ml-[5px] mr-[43px] pt-px tracking-[-0.050px]">Layout Inspector</span>
    </div>
  );
}

function StatusBar() {
  return (
    <div className="flex h-[30px] shrink-0 items-center whitespace-nowrap bg-[#282a36] pb-[5px] text-[14.350px]">
      <Ic c="ml-[18px] mr-[12px] h-4 w-[14px]" vb="0 0 14 16">
        <path d="m7 0 7 5.500L7 11 0 5.500z" fill="#f8f8f2" />
        <path d="m1 9 6 4.500L13 9l1 1.500L7 16l-7-5.500z" fill="#f8f8f2" />
      </Ic>
      <span className="text-[14.120px]">Install successfully finished in 4 s 125 ms. (a minute ago)</span>
      <Branch c="ml-auto mr-[7px] h-[17px] w-[14px] text-[#41b3f0]" />
      <span className="w-[60px] tracking-[-0.200px]">master</span>
      <Ic c="mr-[15px] h-[14px] w-4" vb="0 0 16 14">
        <path d="M0 0h16v14l-3.500-3H0z" fill="#afb1b3" />
        <path d="M8 1.500v5M8 8v1.800" stroke="#282a36" strokeWidth="2.600" />
      </Ic>
      <span className="mr-[11px] flex h-[25px] w-[25px] items-center justify-center rounded-[3px] bg-[linear-gradient(135deg,#e8854a,#c9453f)] text-[11px] text-[#4a2320]">WA</span>
      <span className="w-[103px]">Weather App</span>
      <Ic c="mr-[9px] h-[11px] w-[15px]" vb="0 0 15 11">
        <path d="M0 11 3 0h3l1.500 3L10 0h2.500L15 11h-4l-1-5-2 5H6L5 6l-1 5z" fill="#50fa7b" />
      </Ic>
      <span className="w-[133px]">Dracula (Material)</span>
      <span className="mr-5 h-[18px] w-[18px] rounded-full bg-[#ff79c6]" />
    </div>
  );
}

/* ---------- taskbar ---------- */

const apps: { n: string; on?: 'run' | 'active'; i: ReactNode }[] = [
  {
    n: 'taskview',
    i: (
      <Ic c="h-5 w-5" vb="0 0 20 20">
        <path d="M1 1v3h12V1M1 19v-3h12v3M1 6.500h12v7H1zM17.500 1v4M17.500 12v7" stroke="#fff" strokeWidth="1.300" />
        <path d="M16 7h3v3h-3z" fill="#fff" />
      </Ic>
    ),
  },
  {
    n: 'edge',
    i: (
      <Ic c="h-[21px] w-[21px]" vb="0 0 21 21">
        <defs>
          <linearGradient id="edgeTop" x1="0" x2="1"><stop stopColor="#2aa7e8" /><stop offset="1" stopColor="#5fe05a" /></linearGradient>
        </defs>
        <circle cx="10.500" cy="10.500" r="10" fill="#1173cf" />
        <path d="M.500 10A10 10 0 0 1 20.500 10c0 4-3 5-6 5-2 0-3-1-2-2.500 2-3-1-6-4.500-6S1 8 .500 10z" fill="url(#edgeTop)" />
        <path d="M7 11c-1 5 3 8.500 8 7.500 2-.400 3.500-1.500 4-3-2 1-5 1-7 0s-3-3-2-5c-1-1.500-2.500-1-3 .500z" fill="#0c4fa0" />
      </Ic>
    ),
  },
  {
    n: 'explorer',
    i: (
      <Ic c="ml-px h-[18px] w-[19px]" vb="0 0 19 18">
        <path d="M0 1h7l2 2h10v14H0z" fill="#f5b52a" />
        <path d="M0 5h19v12H0z" fill="#ffd869" />
        <path d="M3 17v-7h13v7h-3v-4H6v4z" fill="#2f87d6" />
      </Ic>
    ),
  },
  {
    n: 'mail',
    i: (
      <Ic c="ml-[3px] h-5 w-[21px]" vb="0 0 21 20">
        <path d="M0 7 10.500 0 21 7v12.500H0z" fill="#0c5ea8" />
        <path d="M2.500 6h16v8h-16z" fill="#fff" />
        <path d="M0 7l10.500 7L21 7v12.500H0z" fill="#28a8ea" />
        <path d="M0 19.500 10.500 12 21 19.500z" fill="#1f8fdb" />
      </Ic>
    ),
  },
  {
    n: 'copilot365',
    i: (
      <Ic c="ml-[2px] h-[20px] w-[18px]" vb="0 0 18 20">
        <defs>
          <linearGradient id="m365" x1="0" x2="1" y1="0" y2="1"><stop stopColor="#8f5bd6" /><stop offset=".5" stopColor="#4b6be0" /><stop offset="1" stopColor="#4fa3e8" /></linearGradient>
        </defs>
        <path fillRule="evenodd" d="M9 0l8.500 5v10L9 20 .500 15V5zM9 6.500 6 8v4l3 1.500 3-1.500V8z" fill="url(#m365)" />
        <path d="M.500 5 9 0v5L6 7.500V13l-5.500 2z" fill="#b9a3ec" opacity=".6" />
        <path d="M.500 15 12 12v-4l5.500 2v5L9 20z" fill="#a86be0" opacity=".5" />
      </Ic>
    ),
  },
  {
    n: 'chrome', on: 'run',
    i: (
      <Ic c="h-5 w-5" vb="-10 -10 20 20">
        <path d="M0 0-8.660-5A10 10 0 0 1 8.660-5z" fill="#ea4335" />
        <path d="M0 0 8.660-5A10 10 0 0 1 0 10z" fill="#fbbc04" />
        <path d="M0 0v10A10 10 0 0 1-8.660-5z" fill="#34a853" />
        <circle r="4.700" fill="#fff" />
        <circle r="3.700" fill="#4285f4" />
      </Ic>
    ),
  },
  {
    n: 'brave',
    i: (
      <Ic c="h-5 w-[17px]" vb="0 0 17 20">
        <path d="M4 0h9l2 2 1.500 3-1.500 9-6.500 6L2 14 .500 5 2 2z" fill="#fb542b" />
        <path d="M4 4.500 8.500 3.500l4.500 1 1 3-3 4 .500 2-3 2.500-3-2.500.500-2-3-4z" fill="#fff" />
        <path d="M5 7l2 .500M12 7l-2 .500M8.500 7v4l-1.500 1.500M8.500 11l1.500 1.500" stroke="#fb542b" />
      </Ic>
    ),
  },
  {
    n: 'vscode',
    i: (
      <Ic c="h-5 w-5" vb="0 0 20 20">
        <path d="M0 6.500 2 5l13 10.500V19.500z" fill="#1a8ad4" />
        <path d="M0 13.500 2 15 15 4.500V.500z" fill="#0b6db5" />
        <path d="M14.500 0 20 2.500v15L14.500 20z" fill="#2fa8f5" />
      </Ic>
    ),
  },
  {
    n: 'studio', on: 'active',
    i: (
      <span className="flex h-5 w-5 items-center justify-center rounded-full bg-white">
        <AndroidHead c="h-[11px] w-[12px] text-[#3ddc84]" />
      </span>
    ),
  },
  {
    n: 'idea',
    i: (
      <span className="flex h-[18px] w-[18px] bg-[conic-gradient(from_200deg,#2b6fe8,#b84fd0,#fe2857,#fc801d,#2196f3,#0a7bf0,#2b6fe8)] p-[2.500px]">
        <span className="flex flex-1 flex-col bg-black pl-[2px] text-[7px] font-bold leading-[8px] text-white">
          IJ<span className="mt-[2px] h-px w-[5px] bg-white" />
        </span>
      </span>
    ),
  },
  {
    n: 'photoshop',
    i: <span className="flex h-[18px] w-[18px] items-center justify-center border border-[#31c5f0] bg-[#071a2b] text-[10px] leading-none text-[#31c5f0]">Ps</span>,
  },
  {
    n: 'word',
    i: (
      <span className="relative flex h-[18px] w-5 flex-col pl-1">
        <span className="h-[4.500px] bg-[#41a5ee]" />
        <span className="h-[4.500px] bg-[#2b7cd3]" />
        <span className="h-[4.500px] bg-[#185abd]" />
        <span className="h-[4.500px] bg-[#103f91]" />
        <span className="absolute left-0 top-[4px] flex h-[10px] w-[11px] items-center justify-center bg-[#185abd] text-[8px] font-bold text-white">W</span>
      </span>
    ),
  },
  {
    n: 'postman',
    i: (
      <Ic c="h-5 w-5" vb="0 0 20 20">
        <circle cx="10" cy="10" r="10" fill="#ff6c37" />
        <path d="m5 15 1-3 5-5 2 2-5 4.500z" fill="#fff" />
        <circle cx="13.700" cy="6.500" r="1.600" fill="#ffd9c9" />
      </Ic>
    ),
  },
  {
    n: 'powerbi',
    i: (
      <Ic c="h-5 w-[17px]" vb="0 0 17 20">
        <path d="M9 0h7.500v20H9z" fill="#d9930c" />
        <path d="M4.500 5h7.500v15H4.500z" fill="#efbf2e" />
        <path d="M0 10h7.500v10H0z" fill="#f7dd75" />
      </Ic>
    ),
  },
];

function Taskbar() {
  return (
    <div className="flex h-[38px] shrink-0 items-center overflow-hidden bg-[#0b2218] text-white">
      <Ic c="ml-3 h-5 w-5" vb="0 0 20 20">
        <path d="M0 2.800 8.200 1.700v7.800H0zM9.200 1.500 20 0v9.500H9.200zM0 10.500h8.200v7.800L0 17.200zM9.200 10.500H20V20L9.200 18.500z" fill="#fff" />
      </Ic>
      <div className="ml-[13px] flex h-[38px] w-[323px] shrink-0 items-center border border-[#5f7d6c] bg-[#335443]">
        <Ic c="ml-[14px] h-[21px] w-[21px]" vb="0 0 21 21">
          <circle cx="13" cy="8" r="6.800" stroke="#e8eeea" strokeWidth="1.500" />
          <path d="m8 13-7.500 7.500" stroke="#e8eeea" strokeWidth="1.500" />
        </Ic>
        <span className="ml-[14px] text-[18px] text-[#dfe6e2]">Search</span>
        <Ic c="ml-auto h-9 w-[74px]" vb="0 0 74 36">
          <path d="M0 36 8 27c2-2 4-2.500 6-2.500h58l2 .500v11z" fill="#e3b98c" />
          <path d="M0 36 2 33.500h72V36z" fill="#c99a6a" />
          <path d="M12 14c4-2.500 7-2 10 0 4-3.500 8-4 12-3l4 17c-5-1-9 0-12 3-3-2-6-2-10 0z" fill="#3f8f5a" />
          <path d="M13 12c4-2.500 7-1.500 10 .500 3-3 7-4 11-3l3.500 16c-4-.800-8 0-11.500 3-3-2-6-2-10 0z" fill="#f7f7f4" />
          <path d="m23 12.500 3 16M16 15l5-.500M17 19l5-.500M18 23l5-.500M26 14l6-2M27 18l6-2M28 22l6-2" stroke="#9aa" strokeWidth=".8" />
          <path d="M28 20 36 5l3 1.500-8 14.500-3.500 2z" fill="#f6a52b" />
          <path d="m36 5 1.500-3 3 1.500L39 6.500z" fill="#e2563c" />
          <path d="M51 4.500c0-4 7-4 7 0" stroke="#1565c8" strokeWidth="1.800" />
          <path d="M45.500 30V14C45.500 6 49 3.500 54.500 3.500S64 6 64 14v16c0 2.500-18.500 2.500-18.500 0z" fill="#1e88f0" />
          <path d="M46.500 19h16.500v9c0 2.500-16.500 2.500-16.500 0z" fill="#0f6ad8" />
          <path d="M46 20c5 3 12 3 17 0M49 10c3-3 8-3 11 0" stroke="#6cc0ff" strokeWidth="1.200" />
        </Ic>
      </div>
      {apps.map((a) => (
        <div key={a.n} className={`flex h-full w-[46.200px] shrink-0 flex-col items-center ${a.on === 'active' ? 'bg-[#0b7a41]' : ''}`}>
          <span className="flex flex-1 items-center">{a.i}</span>
          {a.on && <span className={`-mt-[3px] h-[3px] bg-[#a5f5cb] ${a.on === 'active' ? 'w-full' : 'w-[34px]'}`} />}
        </div>
      ))}
      <Ic c="ml-auto mr-[12px] h-[9px] w-4" vb="0 0 16 9"><path d="m1 8 7-7 7 7" stroke="#fff" strokeWidth="1.500" /></Ic>
      <Ic c="mr-[13px] h-[14px] w-5" vb="0 0 20 14">
        <path d="M7 3h11v9.500H5V8" stroke="#fff" strokeWidth="1.300" />
        <path d="M7.500 5h9v5.500h-9zM18.500 6H20v4h-1.500z" fill="#fff" />
        <path d="M.500 2h5v3a2.500 2.500 0 0 1-5 0zM1.500 0v2M4.500 0v2M3 7v3h2" stroke="#fff" strokeWidth="1.100" />
      </Ic>
      <Ic c="mr-[12px] h-4 w-4">
        <path d="M1 15.500C1 7 7 1 15.500 1" stroke="#9aa8a0" strokeWidth="1.300" />
        <path d="M5 15.500C5 9.500 9.500 5 15.500 5M9 15.500C9 12 12 9 15.500 9" stroke="#fff" strokeWidth="1.300" />
        <circle cx="14" cy="14" r="1.800" fill="#fff" />
      </Ic>
      <Ic c="mr-[14px] h-[17px] w-5" vb="0 0 20 17">
        <path d="M.700 5.500h3.500L8 2v13l-3.800-3.500H.700z" stroke="#fff" strokeWidth="1.200" />
        <path d="M11 6c1 1.500 1 3.500 0 5M13.500 3.500c2.500 3 2.500 7 0 10M16.500 1.500c3.500 4.500 3.500 9.500 0 14" stroke="#fff" strokeWidth="1.200" />
      </Ic>
      <Ic c="mr-[15px] h-[18px] w-[15px]" vb="0 0 15 18">
        <rect x="1" y="4.500" width="9.500" height="9" rx="1.500" stroke="#fff" strokeWidth="1.300" />
        <path d="m10.500 8 3.500-2.500v7L10.500 10M3 2c3-1.500 6-1.500 9 0M3 16c3 1.500 6 1.500 9 0" stroke="#fff" strokeWidth="1.200" />
      </Ic>
      <span className="w-[45px] shrink-0 text-[13.800px]">ENG</span>
      <span className="w-[58px] shrink-0 text-[13.800px]">18:50</span>
      <Ic c="mr-[25px] h-[19px] w-5" vb="0 0 20 19">
        <path d="M0 0h20v16h-7.500L10 19l-2.500-3H0z" fill="#fff" />
        <path d="M4 4.500h12M4 8h12M4 11.500h8" stroke="#0b2218" strokeWidth="1.200" />
      </Ic>
      <span className="mr-[5px] h-full w-px bg-[#6d7f75]" />
    </div>
  );
}

export default function App() {
  return (
    <div className="flex h-[1080px] w-[1920px] flex-col overflow-hidden bg-[#282a36] font-['Open_Sans','Noto_Sans',sans-serif] text-[#f8f8f2]">
      <TitleBar />
      <Toolbar />
      <div className="flex h-[898px] shrink-0">
        <LeftStrip />
        <div className="w-[341px] shrink-0 border-r border-t border-[#1e1f29]" />
        <div className="w-px shrink-0" />
        <Devices />
        <RightStrip />
      </div>
      <BottomTools />
      <StatusBar />
      <Taskbar />
    </div>
  );
}
